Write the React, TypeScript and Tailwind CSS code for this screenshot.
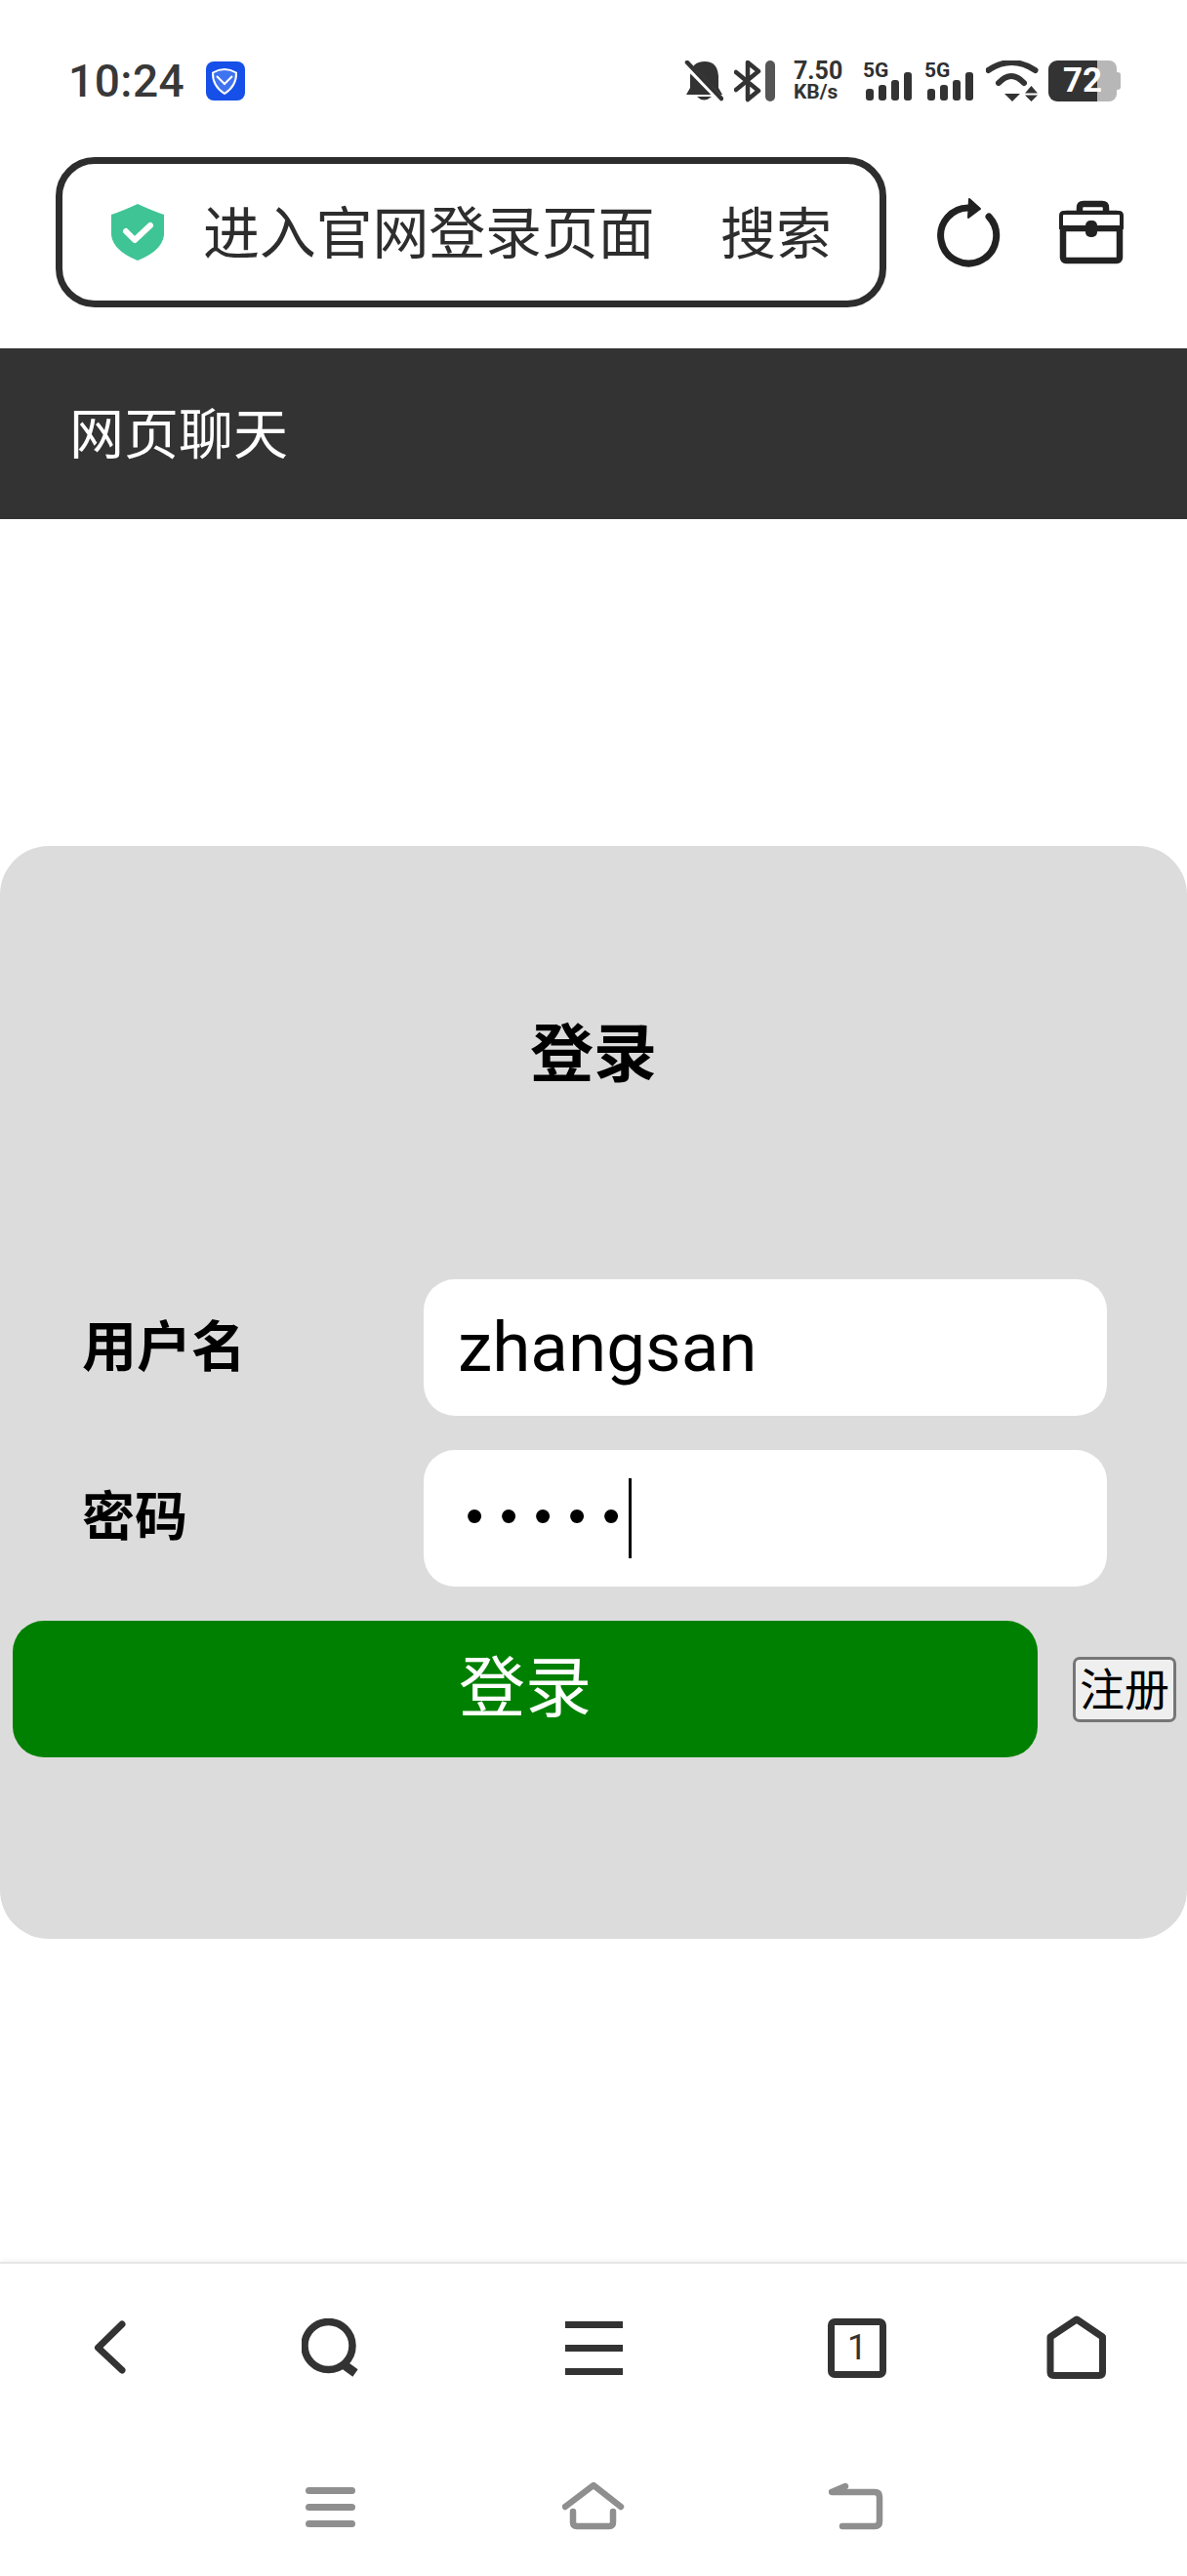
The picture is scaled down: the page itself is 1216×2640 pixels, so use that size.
import React from "react";

const CJK = "font-['Noto_Sans_CJK_SC','Noto_Sans',sans-serif]";

function Signal() {
  return (
    <div className="relative w-[51px] h-[42px]">
      <span className="absolute left-0 top-[-3px] text-[21px] leading-[26px] font-bold font-['Roboto',sans-serif] text-[#2f2f2f]">5G</span>
      <svg width="51" height="42" viewBox="882 62 51 42" className="block">
        <rect x="885" y="91" width="8" height="12" rx="3" fill="#333" />
        <rect x="898" y="87" width="8" height="16" rx="3" fill="#333" />
        <rect x="911" y="82" width="8" height="21" rx="3" fill="#333" />
        <rect x="924" y="74" width="8" height="29" rx="3" fill="#333" />
      </svg>
    </div>
  );
}

function StatusBar() {
  return (
    <div className="flex items-center h-[42px] mt-[62px] pl-[70px] text-[#333]">
      <span className="w-[126px] text-[46px] leading-[42px] font-medium font-['Roboto',sans-serif] text-[#383838] tracking-[0.5px]">10:24</span>
      <div className="ml-[15px] w-[40px] h-[40px] rounded-[8px] bg-[#1650e8]">
        <svg width="40" height="40" viewBox="211 63 40 40" className="block">
          <path d="M230 71 Q236 71 242 74.500 Q242.500 88 230 96 Q217.500 88 218 74.500 Q224 71 230 71 Z" fill="#3f73f0" stroke="#fff" strokeWidth="2" />
          <path d="M222 78 L230 86 L238 78" fill="none" stroke="#fff" strokeWidth="2" />
        </svg>
      </div>
      <svg width="40" height="43" viewBox="700 62 40 43" className="block ml-[450px]">
        <path d="M706 78 Q707 63 721 63 Q734 63 735 78 V90 L739 97 H702 L706 90 Z" fill="#333" />
        <path d="M713 99 Q720 106 728 99 Z" fill="#333" />
        <path d="M702 66 L738 103" stroke="#fff" strokeWidth="7" />
        <path d="M703 64 L738 101" stroke="#333" strokeWidth="4.500" strokeLinecap="round" />
      </svg>
      <svg width="28" height="43" viewBox="751 62 28 43" className="block ml-[11px]">
        <path d="M753 74 L776 93 L765 102 V64 L776 73 L753 92" fill="none" stroke="#333" strokeWidth="4.500" strokeLinejoin="round" strokeLinecap="round" />
      </svg>
      <div className="ml-[4px] w-[10px] h-[42px] rounded-full bg-[#555]" />
      <div className="ml-[19px] w-[52px] flex flex-col items-start font-['Roboto',sans-serif] font-bold text-[#333]">
        <span className="text-[25px] leading-[22px]">7.50</span>
        <span className="text-[21px] leading-[20px]">KB/s</span>
      </div>
      <div className="ml-[19px]"><Signal /></div>
      <div className="ml-[12px]"><Signal /></div>
      <svg width="54" height="43" viewBox="1008 61 54 43" className="block ml-[12px]">
        <path d="M1010.500 71 Q1034 55 1058.500 71" fill="none" stroke="#333" strokeWidth="6" strokeLinecap="round" />
        <path d="M1021 84 Q1034 70 1047 84" fill="none" stroke="#333" strokeWidth="6" strokeLinecap="round" />
        <path d="M1027 95 H1043 L1035 103 Z" fill="#333" />
        <path d="M1048 94.500 L1054.500 87 L1061 94.500 Z M1048 96.500 H1061 L1054.500 103 Z" fill="#333" />
      </svg>
      <div className="relative ml-[10px] flex items-center w-[74px] h-[42px]">
        <div className="w-[50px] h-[42px] rounded-l-[9px] bg-[#333]" />
        <div className="w-[20px] h-[42px] rounded-r-[8px] bg-[#b7b7b7]" />
        <div className="w-[4px] h-[18px] rounded-r-[3px] bg-[#b7b7b7]" />
        <span className="absolute left-[15px] top-0 text-[35px] leading-[42px] font-bold font-['Roboto',sans-serif] text-white">72</span>
      </div>
    </div>
  );
}

function AddressRow() {
  return (
    <div className="flex items-center mt-[57px] h-[154px] pl-[57px]">
      <div className={`flex items-center w-[851px] h-[154px] rounded-[40px] border-[7px] border-[#2d2d2d] pl-[50px] pr-[49px] ${CJK}`}>
        <svg width="54" height="58" viewBox="114 209 54 58" className="block shrink-0">
          <path d="M141 209 Q156 216 168 220 V241 Q166 257 141 267 Q116 257 114 241 V220 Q126 216 141 209 Z" fill="#3fc496" />
          <path d="M129 237 L138 246 L154 231" fill="none" stroke="#fff" strokeWidth="6" strokeLinecap="round" strokeLinejoin="round" />
        </svg>
        <span className="ml-[40px] mb-[6px] text-[58px] leading-[80px] tracking-[-0.2px] text-[#2d2d2d] whitespace-nowrap">进入官网登录页面</span>
        <span className="ml-auto mb-[6px] text-[57px] leading-[80px] text-[#2d2d2d] whitespace-nowrap">搜索</span>
      </div>
      <svg width="66" height="73" viewBox="959 199 66 73" className="block ml-[51px]">
        <path d="M994 210 A28.500 28.500 0 1 0 1013 219" fill="none" stroke="#222" strokeWidth="7" strokeLinecap="round" />
        <path d="M993 201 L1004 211 L992 220 Z" fill="#222" stroke="#222" strokeWidth="2" strokeLinejoin="round" />
      </svg>
      <svg width="66" height="66" viewBox="1085 204 66 66" className="block ml-[60px]">
        <path d="M1106 216 V212 Q1106 208 1110 208 H1129 Q1133 208 1133 212 V216" fill="none" stroke="#222" strokeWidth="6.500" />
        <rect x="1089" y="218" width="58" height="48" rx="3" fill="none" stroke="#222" strokeWidth="6.500" />
        <path d="M1087 232 V220 Q1087 217 1090 217 H1146 Q1149 217 1149 220 V232 Z" fill="#fff" stroke="#222" strokeWidth="4" />
        <path d="M1086 234 H1150" stroke="#222" strokeWidth="4.500" />
        <rect x="1112" y="225" width="12" height="17" rx="5" fill="#222" />
      </svg>
    </div>
  );
}

function LoginCard() {
  return (
    <div className={`mt-[335px] h-[1120px] rounded-[50px] bg-[#dcdcdc] pt-[163px] ${CJK}`}>
      <h1 className="h-[90px] text-center text-[65px] leading-[90px] font-bold text-black">登录</h1>
      <div className="mt-[191px] flex items-center pl-[84px]">
        <label className="w-[350px] mb-[10px] text-[56px] leading-[80px] font-bold text-black">用户名</label>
        <input
          readOnly
          value="zhangsan"
          className="w-[700px] h-[140px] rounded-[32px] bg-white pl-[35px] pb-[2px] text-[71px] text-black font-['Roboto',sans-serif] outline-none"
        />
      </div>
      <div className="mt-[35px] flex items-center pl-[84px]">
        <label className="w-[350px] mb-[10px] text-[54px] leading-[80px] font-bold text-black">密码</label>
        <div className="relative">
          <input
            readOnly
            type="password"
            value="12345"
            className="block w-[700px] h-[140px] rounded-[32px] bg-white pl-[43px] pb-[6px] text-[52px] tracking-[16.800px] text-black font-['Liberation_Sans',sans-serif] outline-none"
          />
          <div className="absolute left-[210px] top-[29px] w-[3px] h-[82px] bg-black" />
        </div>
      </div>
      <div className="mt-[35px] flex items-center pl-[13px]">
        <button className="w-[1050px] h-[140px] rounded-[32px] bg-[#008000] pb-[13px] text-[68px] text-white">登录</button>
        <button className="ml-[36px] w-[106px] h-[67px] rounded-[7px] border-[3px] border-[#767676] bg-[#efefef] pb-[7px] text-[46px] leading-[50px] text-black whitespace-nowrap">注册</button>
      </div>
    </div>
  );
}

function BottomBars() {
  return (
    <div className="mt-auto h-[322px] border-t-2 border-[#e6e6e6] shadow-[0_-3px_4px_rgba(0,0,0,0.03)] bg-white">
      <div className="flex items-center h-[170px] pl-[96px] pt-[2px]">
        <svg width="34" height="56" viewBox="96 2378 34 56" className="block">
          <path d="M125 2382 L100.500 2406 L125 2429" fill="none" stroke="#333" strokeWidth="7" strokeLinecap="round" strokeLinejoin="round" />
        </svg>
        <svg width="60" height="60" viewBox="309 2376 60 60" className="block ml-[179px]">
          <circle cx="336.500" cy="2404" r="24.500" fill="none" stroke="#333" strokeWidth="7.500" />
          <path d="M353 2424 L364 2432" fill="none" stroke="#333" strokeWidth="9" />
        </svg>
        <div className="ml-[210px] flex flex-col gap-[17px] w-[59px]">
          <div className="h-[7px] bg-[#333]" />
          <div className="h-[7px] bg-[#333]" />
          <div className="h-[7px] bg-[#333]" />
        </div>
        <div className="ml-[210px] flex items-center justify-center w-[60px] h-[61px] rounded-[7px] border-[7px] border-[#333] text-[36px] leading-none text-[#333] font-['Roboto',sans-serif]">1</div>
        <svg width="62" height="66" viewBox="1072 2371 62 66" className="block ml-[164px]">
          <path d="M1103 2375 L1129.500 2393 V2429 Q1129.500 2432.500 1126 2432.500 H1079.500 Q1076 2432.500 1076 2429 V2393 Z" fill="none" stroke="#333" strokeWidth="7" strokeLinejoin="round" />
        </svg>
      </div>
      <div className="flex items-center h-[80px] mt-[39px] pl-[313px]">
        <div className="flex flex-col gap-[10px] w-[51px]">
          <div className="h-[7px] rounded-full bg-[#8f8f8f]" />
          <div className="h-[7px] rounded-full bg-[#8f8f8f]" />
          <div className="h-[7px] rounded-full bg-[#8f8f8f]" />
        </div>
        <svg width="64" height="50" viewBox="576 2545 64 50" className="block ml-[212px]">
          <path d="M579 2570 L608 2548 L636 2570 M587 2575 V2586 Q587 2590 591 2590 H624 Q628 2590 628 2586 V2575" fill="none" stroke="#8f8f8f" strokeWidth="6.500" strokeLinecap="round" strokeLinejoin="round" />
        </svg>
        <svg width="56" height="50" viewBox="849 2545 56 50" className="block ml-[209px]">
          <path d="M866 2549 L852 2555 H896 Q901 2555 901 2560 V2585 Q901 2590 896 2590 H863" fill="none" stroke="#8f8f8f" strokeWidth="6.500" strokeLinecap="round" strokeLinejoin="round" />
        </svg>
      </div>
    </div>
  );
}

export default function App() {
  return (
    <div className="flex flex-col w-[1216px] h-[2640px] overflow-hidden bg-white">
      <StatusBar />
      <AddressRow />
      <div className={`flex items-center mt-[42px] h-[175px] bg-[#333] pl-[71px] pb-[7px] text-[56px] text-white ${CJK}`}>网页聊天</div>
      <LoginCard />
      <BottomBars />
    </div>
  );
}
